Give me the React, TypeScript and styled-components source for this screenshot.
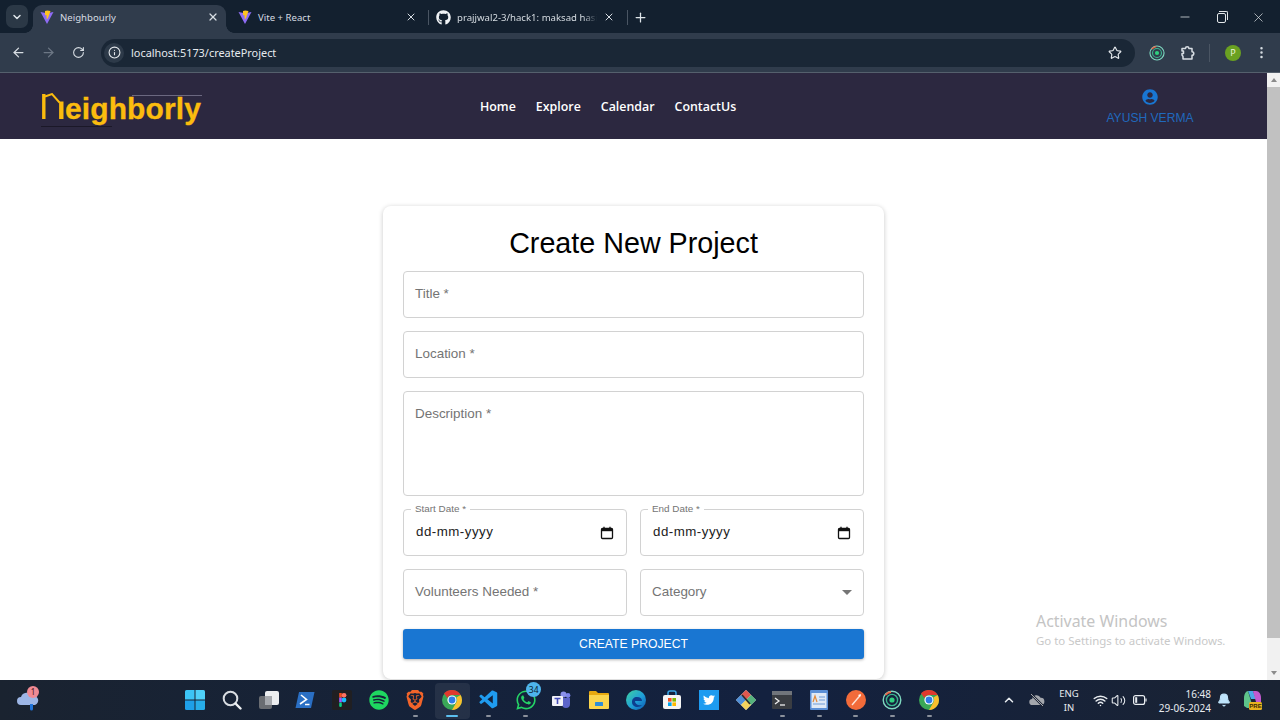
import React from "react";
import styled, { createGlobalStyle } from "styled-components";
import {
  ArrowLeft, ArrowRight, RotateCw, Info, Star, MoreVertical, X, Plus, Minus, ChevronDown, ChevronUp,
  Wifi, Volume2, Bell,
} from "lucide-react";
import { FaGithub, FaSpotify, FaWhatsapp, FaTwitter, FaUserCircle } from "react-icons/fa";
import { SiBrave } from "react-icons/si";
import { VscVscode } from "react-icons/vsc";

const Global = createGlobalStyle`
  html, body { margin: 0; padding: 0; height: 100%; overflow: hidden; background: #fff; }
  #root { height: 720px; }
  * { box-sizing: border-box; }
`;

const Screen = styled.div`
  width: 1280px; height: 720px; display: flex; flex-direction: column; overflow: hidden;
  font-family: "Liberation Sans", Arial, sans-serif; position: relative;
`;

/* ---------- browser chrome ---------- */
const TabStrip = styled.div`
  height: 33px; background: #13202f; display: flex; align-items: flex-end; padding-left: 6px; flex: none;
`;
const TabMenu = styled.div`
  width: 22px; height: 23px; margin: 0 5px 5px 0; border-radius: 7px; background: #2b3846; color: #dfe5ea;
  display: flex; align-items: center; justify-content: center; flex: none;
`;
const Tab = styled.div<{ $w: number; $l: number; $r: number; $active?: boolean; $sep?: boolean }>`
  width: ${(p) => p.$w}px; height: 28px; display: flex; align-items: center; gap: 6px; padding: 0 ${(p) => p.$r}px 4px ${(p) => p.$l}px;
  background: ${(p) => (p.$active ? "#303c4c" : "transparent")}; border-radius: 9px 9px 0 0; flex: none;
  position: relative; color: #d7dde3;
  &::after {
    content: ""; position: absolute; display: ${(p) => (p.$sep || p.$active ? "block" : "none")};
    ${(p) =>
      p.$active
        ? "right: -8px; bottom: 0; width: 8px; height: 8px; background: radial-gradient(circle at 100% 0, transparent 7.5px, #303c4c 8px);"
        : "right: 0; top: 5px; height: 15px; width: 1px; background: #4a5563;"}
  }
  &::before {
    content: ""; position: absolute; display: ${(p) => (p.$active ? "block" : "none")};
    left: -8px; bottom: 0; width: 8px; height: 8px; background: radial-gradient(circle at 0 0, transparent 7.5px, #303c4c 8px);
  }
`;
const TabTitle = styled.span<{ $fade?: boolean }>`
  flex: 1; min-width: 0; white-space: nowrap; font: 9.6px "Noto Sans", "Open Sans", sans-serif; color: #d5dbe1;
  ${(p) => p.$fade && "mask-image: linear-gradient(90deg, #000 90%, transparent 100%);"}
`;
const NewTab = styled.div`
  margin: 0 0 4px 4px; width: 16px; height: 24px; color: #dfe5ea; display: flex; align-items: center; justify-content: center;
`;
const WindowControls = styled.div`
  margin-left: auto; display: flex; align-self: flex-start; color: #e3e7ea; padding-top: 10px; padding-right: 14px; gap: 23px;
`;
const RestoreIcon = styled.div`
  width: 9px; height: 10px; margin: 3px 2px 0 2px; border: 1px solid #e3e7ea; border-radius: 2px; position: relative;
  &::after { content: ""; position: absolute; top: -3px; left: 1px; width: 8px; height: 8px; border-top: 1px solid #e3e7ea; border-right: 1px solid #e3e7ea; border-radius: 0 2px 0 0; }
`;
const Toolbar = styled.div`
  height: 40px; background: #303c4c; border-bottom: 1px solid #55606d; display: flex; align-items: center; padding-left: 3px; flex: none;
`;
const NavBtn = styled.div<{ $dim?: boolean }>`
  width: 30px; height: 28px; display: flex; align-items: center; justify-content: center;
  color: ${(p) => (p.$dim ? "#6c7785" : "#d7dde3")}; flex: none;
`;
const Omnibox = styled.div`
  margin-left: 8px; width: 1034px; height: 28px; border-radius: 14px; background: #1a2736; display: flex; align-items: center; padding: 0 13px 0 3px; flex: none;
`;
const InfoChip = styled.div`
  width: 20px; height: 20px; border-radius: 50%; background: #2d3a49; color: #e4e8ec; display: flex; align-items: center; justify-content: center;
`;
const Url = styled.span`
  margin-left: 7px; font: 10.9px "Noto Sans", "Open Sans", sans-serif; color: #e6eaee; flex: 1;
`;
const ToolIcons = styled.div`
  display: flex; align-items: center; flex: 1; color: #d7dde3; padding-left: 14px;
`;
const ToolDivider = styled.div`
  width: 1px; height: 18px; background: #4a5563; margin: 0 15px 0 13px;
`;
const Avatar = styled.div`
  width: 16px; height: 16px; border-radius: 50%; background: #6aa121; color: #e9f3d9; font: 9px "Noto Sans", sans-serif;
  display: flex; align-items: center; justify-content: center;
`;

/* ---------- page ---------- */
const Viewport = styled.div`
  flex: 1; min-height: 0; display: flex;
`;
const Page = styled.div`
  flex: 1; min-width: 0; display: flex; flex-direction: column; background: #fff;
`;
const Scrollbar = styled.div`
  width: 13px; background: #f1f1f1; display: flex; flex-direction: column; align-items: center; justify-content: space-between; flex: none;
`;
const ScrollTop = styled.div`
  display: flex; flex-direction: column; width: 100%;
`;
const ScrollArrow = styled.div<{ $down?: boolean }>`
  height: 14px; width: 100%; flex: none; display: flex; align-items: center; justify-content: center;
  &::before { content: ""; border-left: 3.5px solid transparent; border-right: 3.5px solid transparent;
    ${(p) => (p.$down ? "border-top: 4px solid #8a8a8a;" : "border-bottom: 4px solid #8a8a8a;")} }
`;
const ScrollThumb = styled.div`
  width: 100%; height: 551px; background: #c1c1c1; flex: none;
`;
const NavBar = styled.header`
  height: 66px; background: #2c2840; display: grid; grid-template-columns: 480px 1fr 120px; align-items: center; flex: none; padding-right: 57px;
`;
const Logo = styled.div`
  margin-left: 41px; width: 162px; height: 36px; display: flex; align-items: flex-end; position: relative;
`;
const LogoWord = styled.span`
  font: 700 30px/34px "Liberation Sans", Arial, sans-serif; color: #fbbc0e; margin: 0 0 -2px 1px; letter-spacing: 0.1px;
  -webkit-text-stroke: 0.3px #fbbc0e;
`;
const LogoRule = styled.span<{ $top: number; $left: number; $w: number; $c: string }>`
  position: absolute; top: ${(p) => p.$top}px; left: ${(p) => p.$left}px; width: ${(p) => p.$w}px; height: 1px; background: ${(p) => p.$c};
`;
const NavLinks = styled.nav`
  display: flex; gap: 20px; align-items: center; margin-top: 1px;
`;
const NavLink = styled.a`
  font: 600 12.4px "Open Sans", "Noto Sans", sans-serif; color: #fff; text-decoration: none;
`;
const User = styled.div`
  display: flex; flex-direction: column; align-items: center; gap: 6px; color: #1976d2; margin-top: 1px;
`;
const UserName = styled.span`
  font: 400 12.1px "Liberation Sans", Arial, sans-serif; color: #2069bd; white-space: nowrap;
`;
const Content = styled.main`
  flex: 1; min-height: 0; display: flex; justify-content: center; padding-top: 67px;
`;
const Card = styled.form`
  width: 501px; height: 473px; padding: 20px; border-radius: 8px; background: #fff;
  box-shadow: 0 1px 5px rgba(0,0,0,.22); display: flex; flex-direction: column; gap: 13px;
`;
const Heading = styled.h1`
  margin: 0; height: 32px; text-align: center; font: 400 28.7px/34px "Liberation Sans", Arial, sans-serif; color: #000;
`;
const Field = styled.div<{ $h?: number; $top?: boolean }>`
  height: ${(p) => p.$h ?? 47}px; border: 1px solid #d2d2d2; border-radius: 4px; padding: ${(p) => (p.$top ? "13px 12px 0 11px" : "0 12px 3px 11px")};
  display: flex; align-items: ${(p) => (p.$top ? "flex-start" : "center")}; justify-content: space-between; position: relative; min-width: 0;
`;
const Placeholder = styled.span`
  font: 400 13.45px/17px "Liberation Sans", Arial, sans-serif; color: #747474;
`;
const Row = styled.div`
  display: grid; grid-template-columns: 1fr 1fr; gap: 13px;
`;
const Notch = styled.span`
  position: absolute; top: -7px; left: 7px; background: #fff; padding: 0 4px; font: 400 9.9px/12px "Liberation Sans", Arial, sans-serif; color: #747474;
`;
const DateValue = styled.span`
  font: 400 13.3px/17px "Liberation Sans", Arial, sans-serif; color: #222; letter-spacing: 0.5px; margin-left: 1px;
`;
const Caret = styled.span`
  width: 0; height: 0; margin: 3px -1px 0 0; border-left: 5px solid transparent; border-right: 5px solid transparent; border-top: 5px solid #757575;
`;
const CalendarSlot = styled.span`
  display: flex; margin-top: 3px;
`;
const Submit = styled.button`
  height: 30px; border: 0; border-radius: 3px; background: #1976d2; color: #fff; font: 500 12.2px "Liberation Sans", Arial, sans-serif;
  box-shadow: 0 1px 3px rgba(0,0,0,.3); padding: 0 0 1px 0;
`;
const Watermark = styled.div`
  position: absolute; left: 1036px; top: 611px; color: #cfcfcf; font-family: "Noto Sans", "Open Sans", sans-serif;
`;
const WatermarkTitle = styled.div`
  font-size: 15.9px; line-height: 20px; color: #c4c4c4;
`;
const WatermarkSub = styled.div`
  font-size: 11.45px; line-height: 20px; color: #c9c9c9;
`;

/* ---------- taskbar ---------- */
const Taskbar = styled.footer`
  height: 40px; flex: none; background: linear-gradient(90deg, #1a2330 0%, #15223a 35%, #13213f 60%, #1a2333 100%);
  display: grid; grid-template-columns: 177px auto 1fr; align-items: center;
`;
const Weather = styled.div`
  padding-left: 16px; position: relative; height: 40px; display: flex; align-items: center;
`;
const WeatherBadge = styled.span`
  position: absolute; left: 27px; top: 6px; width: 12px; height: 12px; border-radius: 50%; background: #f08a94; color: #40161b;
  font: 8px/12px "Noto Sans", sans-serif; text-align: center;
`;
const Apps = styled.div`
  display: grid; grid-auto-flow: column; grid-auto-columns: 36.7px; height: 40px;
`;
const AppSlot = styled.div<{ $active?: boolean; $running?: boolean }>`
  position: relative; display: flex; align-items: center; justify-content: center; height: 40px;
  ${(p) => p.$active && "&::before { content: ''; position: absolute; inset: 3px 1px 1px 1px; background: rgba(255,255,255,.07); border-radius: 4px; }"}
  &::after {
    content: ""; display: ${(p) => (p.$active || p.$running ? "block" : "none")}; position: absolute; left: 50%; bottom: 3px; height: 2px; border-radius: 1px;
    width: ${(p) => (p.$active ? 12 : 5)}px; margin-left: ${(p) => (p.$active ? -6 : -2.5)}px; background: ${(p) => (p.$active ? "#5cc0f0" : "#8b919c")};
  }
  & > svg { position: relative; }
`;
const CountBadge = styled.span`
  position: absolute; top: 2px; left: 19px; width: 15px; height: 15px; border-radius: 50%; background: #4eb4ec; color: #0b2230;
  font: 8.5px/15px "Noto Sans", sans-serif; text-align: center;
`;
const Tray = styled.div`
  display: flex; align-items: center; justify-content: flex-end; color: #e8ecf0; padding-right: 18px; height: 40px;
`;
const Lang = styled.div`
  font: 9.5px/14px "Noto Sans", sans-serif; text-align: center; color: #e8ecf0; width: 24px; margin: 1px 12px 0 12px;
`;
const Clock = styled.div`
  font: 10px/14px "Noto Sans", sans-serif; text-align: right; color: #e8ecf0; margin: 1px 0 0 0; width: 64px;
`;
const TrayGap = styled.span<{ $w: number }>`
  width: ${(p) => p.$w}px; flex: none;
`;

/* ---------- drawn icons ---------- */
const ViteIcon = () => (
  <svg width="14" height="15" viewBox="0 0 14 15">
    <path d="M.5 2 7 14 13.5 2 7 3.2z" fill="#8f6cf5" />
    <path d="M5 1 7.3 .6 10.5 1 8 8 6.8 9.5 6.4 5 5 5.2z" fill="#ffc31f" />
  </svg>
);
const ChromeIcon = ({ s = 20 }: { s?: number }) => (
  <svg width={s} height={s} viewBox="0 0 20 20">
    <circle cx="10" cy="10" r="10" fill="#3aa757" />
    <path d="M10 0a10 10 0 0 1 8.66 5H10a5 5 0 0 0-4.6 3L2 3.2A10 10 0 0 1 10 0z" fill="#e0392e" />
    <path d="M18.66 5A10 10 0 0 1 10 20l3.9-6.8A5 5 0 0 0 14.3 7.4L18.66 5z" fill="#fbc02d" />
    <circle cx="10" cy="10" r="4.6" fill="#fff" />
    <circle cx="10" cy="10" r="3.4" fill="#2f7be8" />
  </svg>
);
const RadarIcon = ({ s = 20 }: { s?: number }) => (
  <svg width={s} height={s} viewBox="0 0 20 20" fill="none">
    <circle cx="10" cy="10" r="8.8" stroke="#7fd8c0" strokeWidth="1.4" />
    <circle cx="10" cy="10" r="5.6" stroke="#3bb58f" strokeWidth="1.4" />
    <circle cx="10" cy="10" r="2.6" fill="#2fd07f" />
    <path d="M3.500 5A8 8 0 0 1 9 2" stroke="#e86a4a" strokeWidth="1.800" />
  </svg>
);
const PuzzleOutline = () => (
  <svg width="16" height="16" viewBox="0 0 16 16" fill="none">
    <path d="M2 3.500h3.500a1.700 1.700 0 0 1 3.400 0h3.100v3.200a1.800 1.800 0 0 1 0 3.600V14H3v-2.500L2 10V8.500h1.500V6H2z" stroke="#d7dde3" strokeWidth="1.500" strokeLinejoin="round" />
  </svg>
);
const CloudMuted = () => (
  <svg width="16" height="16" viewBox="0 0 16 16">
    <path d="M3.500 13a3 3 0 0 1-.4-6 4.500 4.500 0 0 1 8.500-1.200A3.600 3.600 0 0 1 12 13z" fill="#a4a7ad" />
    <path d="M2 2 14.500 14.500" stroke="#1b2333" strokeWidth="2.400" /><path d="M2 2 14 14" stroke="#a4a7ad" strokeWidth="1" />
  </svg>
);
const Windows = () => (
  <svg width="20" height="20" viewBox="0 0 20 20">
    <path d="M0 1.5A1.5 1.5 0 0 1 1.5 0h8v9.5H0z" fill="#3cc4f5" /><path d="M10.5 0h8A1.5 1.5 0 0 1 20 1.5v8h-9.5z" fill="#4fd0f8" />
    <path d="M0 10.5h9.5V20h-8A1.5 1.5 0 0 1 0 18.5z" fill="#1e9fe8" /><path d="M10.5 10.5H20v8a1.5 1.5 0 0 1-1.5 1.5h-8z" fill="#27ade9" />
  </svg>
);
const SearchGlyph = () => (
  <svg width="20" height="20" viewBox="0 0 20 20" fill="none">
    <circle cx="8.5" cy="8.5" r="6.8" stroke="#d9dde2" strokeWidth="2" /><path d="m13.5 13.5 5 5" stroke="#eef1f4" strokeWidth="2.4" strokeLinecap="round" />
  </svg>
);
const TaskView = () => (
  <svg width="20" height="20" viewBox="0 0 20 20">
    <rect x="0" y="6" width="13" height="13" rx="2" fill="#6a6d72" /><rect x="6" y="1" width="14" height="14" rx="2" fill="#eceef0" />
    <rect x="6" y="6" width="7" height="9" fill="#a6a9ae" />
  </svg>
);
const PowerShell = () => (
  <svg width="20" height="18" viewBox="0 0 20 18">
    <path d="M4 1h15.5L16 17H.5z" fill="#2a6fc4" /><path d="m6 4 5.5 4.5L5 13" stroke="#fff" strokeWidth="1.6" fill="none" /><path d="M10 13.5h4.5" stroke="#fff" strokeWidth="1.5" />
  </svg>
);
const Figma = () => (
  <svg width="20" height="20" viewBox="0 0 20 20">
    <rect width="20" height="20" rx="2" fill="#201f22" />
    <circle cx="12" cy="10" r="2.4" fill="#1abcfe" /><path d="M7.2 7.6V3h2.6v4.6z" fill="#f24e1e" /><rect x="9.6" y="3" width="4.8" height="4.6" rx="2.3" fill="#ff7262" />
    <rect x="7.2" y="7.6" width="2.6" height="4.8" fill="#a259ff" /><rect x="7.2" y="12.4" width="2.6" height="4.6" rx="1.3" fill="#0acf83" />
  </svg>
);
const Teams = () => (
  <svg width="20" height="18" viewBox="0 0 20 18">
    <circle cx="16" cy="4.5" r="2.4" fill="#7b83eb" /><circle cx="11.5" cy="3.6" r="3" fill="#8a90ea" />
    <path d="M8 7h10v6a4 4 0 0 1-8 0z" fill="#5c64c9" />
    <rect x="0" y="5" width="11" height="10" rx="1" fill="#f2f2f8" />
    <path d="M2.5 7.5h6M5.5 7.5v5.5" stroke="#464eb8" strokeWidth="1.6" />
  </svg>
);
const Folder = () => (
  <svg width="20" height="20" viewBox="0 0 20 20">
    <path d="M0 2a1 1 0 0 1 1-1h6l2 2h10a1 1 0 0 1 1 1v3H0z" fill="#e8a90f" /><path d="M0 5h20v13a1 1 0 0 1-1 1H1a1 1 0 0 1-1-1z" fill="#fbd54d" />
    <rect x="6" y="12" width="8" height="4" rx=".5" fill="#2e8dd6" />
  </svg>
);
const Edge = () => (
  <svg width="20" height="20" viewBox="0 0 20 20">
    <defs><linearGradient id="edgeG" x1="0" y1="0" x2="1" y2="1"><stop offset="0" stopColor="#3fd3a0" /><stop offset=".55" stopColor="#1f9fd8" /><stop offset="1" stopColor="#0c56b0" /></linearGradient></defs>
    <circle cx="10" cy="10" r="10" fill="url(#edgeG)" /><path d="M6 12c0-3 2-5 5-5 3 0 5 1.500 5 4H9c0 3 3 5 7 4-2 3-10 3-10-3z" fill="#0d3f8f" />
  </svg>
);
const Store = () => (
  <svg width="20" height="20" viewBox="0 0 20 20">
    <path d="M6 5V3a2 2 0 0 1 2-2h4a2 2 0 0 1 2 2v2" stroke="#38a6e8" strokeWidth="1.5" fill="none" />
    <rect x="1" y="5" width="18" height="14" rx="2" fill="#f5f5f5" />
    <rect x="6" y="8" width="3.600" height="3.600" fill="#f25022" /><rect x="10.400" y="8" width="3.600" height="3.600" fill="#7fba00" />
    <rect x="6" y="12.400" width="3.600" height="3.600" fill="#00a4ef" /><rect x="10.400" y="12.400" width="3.600" height="3.600" fill="#ffb900" />
  </svg>
);
const TwitterTile = () => (
  <svg width="20" height="20" viewBox="0 0 20 20"><rect width="20" height="20" fill="#1d9bf0" /><FaTwitter x="4" y="4" size="12" color="#fff" /></svg>
);
const GitKraken = () => (
  <svg width="20" height="20" viewBox="0 0 20 20">
    <path d="M10 0 20 10 10 20 0 10z" fill="#e9e7e0" /><path d="M10 0 15 5 10 10 5 5z" fill="#e0584f" /><path d="M15 5 20 10 15 15 10 10z" fill="#55b37c" />
    <path d="M5 5 10 10 5 15 0 10z" fill="#4f8fd8" /><path d="M10 10 15 15 10 20 5 15z" fill="#f4d35e" /><path d="M6 5 14 14" stroke="#2a2a2a" strokeWidth="1.6" />
  </svg>
);
const TerminalTile = () => (
  <svg width="20" height="18" viewBox="0 0 20 18">
    <rect width="20" height="18" rx="1" fill="#3a3d42" /><rect width="20" height="4" fill="#71757b" />
    <path d="m3 7 4 3-4 3" stroke="#eee" strokeWidth="1.3" fill="none" /><path d="M8 14h5" stroke="#eee" strokeWidth="1.3" />
  </svg>
);
const Doc = () => (
  <svg width="18" height="20" viewBox="0 0 18 20">
    <rect width="18" height="20" rx="1" fill="#5b8fd6" /><rect x="1.500" y="3" width="15" height="15" fill="#dfe9f6" />
    <path d="M3 12 5 6l2 6" stroke="#e08a3c" strokeWidth="1.200" fill="none" /><path d="M9 7h6M9 10h6M3 14h12" stroke="#6e9bd8" strokeWidth="1.200" />
  </svg>
);
const Postman = () => (
  <svg width="20" height="20" viewBox="0 0 20 20">
    <circle cx="10" cy="10" r="10" fill="#f26b3a" /><path d="M6 15 14.500 5" stroke="#fde3d6" strokeWidth="1.400" /><path d="m12 5 3-1-1 3z" fill="#fff" />
  </svg>
);
const Battery = () => (
  <svg width="14" height="10" viewBox="0 0 14 10" fill="none">
    <rect x=".6" y=".6" width="11" height="8.800" rx="2" stroke="#e8ecf0" strokeWidth="1.200" /><rect x="2.200" y="2.200" width="2" height="5.600" fill="#e8ecf0" /><path d="M13 3.500v3" stroke="#e8ecf0" strokeWidth="1.200" />
  </svg>
);
const Copilot = () => (
  <svg width="20" height="20" viewBox="0 0 20 20">
    <path d="M6 1h5l3 8H9z" fill="#4aa8e8" /><path d="M11 1h3c3 0 5 3 5 7v4h-5z" fill="#c35ad0" /><path d="M2 16V8c0-4 2-7 4-7l5 17H5z" fill="#5ec48a" />
    <rect x="7" y="12" width="13" height="8" rx="1.500" fill="#e8b21f" />
    <text x="13.500" y="18.300" fontSize="6" fontWeight="700" textAnchor="middle" fill="#3b2a05" fontFamily="Liberation Sans">PRE</text>
  </svg>
);
const CloudRain = () => (
  <svg width="24" height="24" viewBox="0 0 24 24">
    <path d="M5 17a4 4 0 0 1 0-8 6 6 0 0 1 11-1 4.500 4.500 0 0 1 3 9z" fill="#9db6e6" /><path d="M14 16v5a1.500 1.500 0 0 0 3 0v-5z" fill="#1f73d8" />
  </svg>
);
const CalendarGlyph = () => (
  <svg width="14" height="14" viewBox="0 0 14 14" fill="none">
    <rect x="1.500" y="2.500" width="11" height="10" rx="1" stroke="#111" strokeWidth="1.300" />
    <path d="M1.500 4h11" stroke="#111" strokeWidth="2.400" /><path d="M4 .8v2M10 .8v2" stroke="#111" strokeWidth="1.300" />
  </svg>
);
const LogoN = () => (
  <svg width="23" height="31" viewBox="0 0 23 31" fill="none">
    <path d="M2.800 26V1" stroke="#fbbc0e" strokeWidth="3.400" />
    <path d="M4 3.500 11 1l7.500 8.500" stroke="#fbbc0e" strokeWidth="1.900" />
    <path d="M20.300 8.500V26" stroke="#fbbc0e" strokeWidth="4.400" />
  </svg>
);

const apps: { el: React.ReactNode; running?: boolean; active?: boolean; badge?: string }[] = [
  { el: <Windows /> }, { el: <SearchGlyph /> }, { el: <TaskView /> }, { el: <PowerShell /> }, { el: <Figma /> },
  { el: <FaSpotify size={20} color="#1ed760" /> }, { el: <SiBrave size={20} color="#f2642a" />, running: true },
  { el: <ChromeIcon />, active: true }, { el: <VscVscode size={22} color="#1f9cf0" />, running: true },
  { el: <FaWhatsapp size={22} color="#25d366" />, running: true, badge: "34" }, { el: <Teams /> }, { el: <Folder /> }, { el: <Edge /> },
  { el: <Store /> }, { el: <TwitterTile /> }, { el: <GitKraken /> }, { el: <TerminalTile />, running: true }, { el: <Doc />, running: true },
  { el: <Postman />, running: true }, { el: <RadarIcon />, running: true }, { el: <ChromeIcon />, running: true },
];

export default function App() {
  return (
    <Screen>
      <Global />
      <TabStrip>
        <TabMenu><ChevronDown size={12} strokeWidth={3} /></TabMenu>
        <Tab $w={193} $l={7} $r={7} $active>
          <ViteIcon /><TabTitle>Neighbourly</TabTitle><X size={12} strokeWidth={2.5} />
        </Tab>
        <Tab $w={203} $l={12} $r={12} $sep>
          <ViteIcon /><TabTitle>Vite + React</TabTitle><X size={12} strokeWidth={2} />
        </Tab>
        <Tab $w={199} $l={7} $r={13} $sep>
          <FaGithub size={15} color="#f0f3f6" /><TabTitle $fade>prajjwal2-3/hack1: maksad hasi</TabTitle><X size={12} strokeWidth={2} />
        </Tab>
        <NewTab><Plus size={15} strokeWidth={2} /></NewTab>
        <WindowControls>
          <Minus size={14} strokeWidth={1.3} />
          <RestoreIcon />
          <X size={15} strokeWidth={1.1} />
        </WindowControls>
      </TabStrip>
      <Toolbar>
        <NavBtn><ArrowLeft size={15} /></NavBtn>
        <NavBtn $dim><ArrowRight size={15} /></NavBtn>
        <NavBtn><RotateCw size={13} /></NavBtn>
        <Omnibox>
          <InfoChip><Info size={13} /></InfoChip>
          <Url>localhost:5173/createProject</Url>
          <Star size={14} strokeWidth={2} color="#e4e8ec" />
        </Omnibox>
        <ToolIcons>
          <RadarIcon s={16} />
          <TrayGap $w={15} />
          <PuzzleOutline />
          <ToolDivider />
          <Avatar>P</Avatar>
          <TrayGap $w={13} />
          <MoreVertical size={15} />
        </ToolIcons>
      </Toolbar>
      <Viewport>
        <Page>
          <NavBar>
            <Logo>
              <LogoN />
              <LogoWord>eighborly</LogoWord>
              <LogoRule $top={7} $left={91} $w={70} $c="#6b6880" />
              <LogoRule $top={38} $left={0} $w={71} $c="#1b1828" />
            </Logo>
            <NavLinks>
              <NavLink>Home</NavLink>
              <NavLink>Explore</NavLink>
              <NavLink>Calendar</NavLink>
              <NavLink>ContactUs</NavLink>
            </NavLinks>
            <User>
              <FaUserCircle size={16} color="#1976d2" />
              <UserName>AYUSH VERMA</UserName>
            </User>
          </NavBar>
          <Content>
            <Card>
              <Heading>Create New Project</Heading>
              <Field><Placeholder>Title *</Placeholder></Field>
              <Field><Placeholder>Location *</Placeholder></Field>
              <Field $h={105} $top><Placeholder>Description *</Placeholder></Field>
              <Row>
                <Field><Notch>Start Date *</Notch><DateValue>dd-mm-yyyy</DateValue><CalendarSlot><CalendarGlyph /></CalendarSlot></Field>
                <Field><Notch>End Date *</Notch><DateValue>dd-mm-yyyy</DateValue><CalendarSlot><CalendarGlyph /></CalendarSlot></Field>
              </Row>
              <Row>
                <Field><Placeholder>Volunteers Needed *</Placeholder></Field>
                <Field><Placeholder>Category</Placeholder><Caret /></Field>
              </Row>
              <Submit type="button">CREATE PROJECT</Submit>
            </Card>
          </Content>
        </Page>
        <Scrollbar>
          <ScrollTop>
            <ScrollArrow />
            <ScrollThumb />
          </ScrollTop>
          <ScrollArrow $down />
        </Scrollbar>
      </Viewport>
      <Taskbar>
        <Weather>
          <CloudRain />
          <WeatherBadge>1</WeatherBadge>
        </Weather>
        <Apps>
          {apps.map((a, i) => (
            <AppSlot key={i} $active={a.active} $running={a.running}>
              {a.el}
              {a.badge && <CountBadge>{a.badge}</CountBadge>}
            </AppSlot>
          ))}
        </Apps>
        <Tray>
          <ChevronUp size={14} strokeWidth={2.6} />
          <TrayGap $w={13} />
          <CloudMuted />
          <Lang>ENG<br />IN</Lang>
          <Wifi size={15} strokeWidth={2.4} />
          <TrayGap $w={3} />
          <Volume2 size={15} strokeWidth={1.7} />
          <TrayGap $w={7} />
          <Battery />
          <Clock>16:48<br />29-06-2024</Clock>
          <TrayGap $w={6} />
          <Bell size={14} fill="#bfe4fb" color="#bfe4fb" />
          <TrayGap $w={11} />
          <Copilot />
        </Tray>
      </Taskbar>
      <Watermark>
        <WatermarkTitle>Activate Windows</WatermarkTitle>
        <WatermarkSub>Go to Settings to activate Windows.</WatermarkSub>
      </Watermark>
    </Screen>
  );
}
